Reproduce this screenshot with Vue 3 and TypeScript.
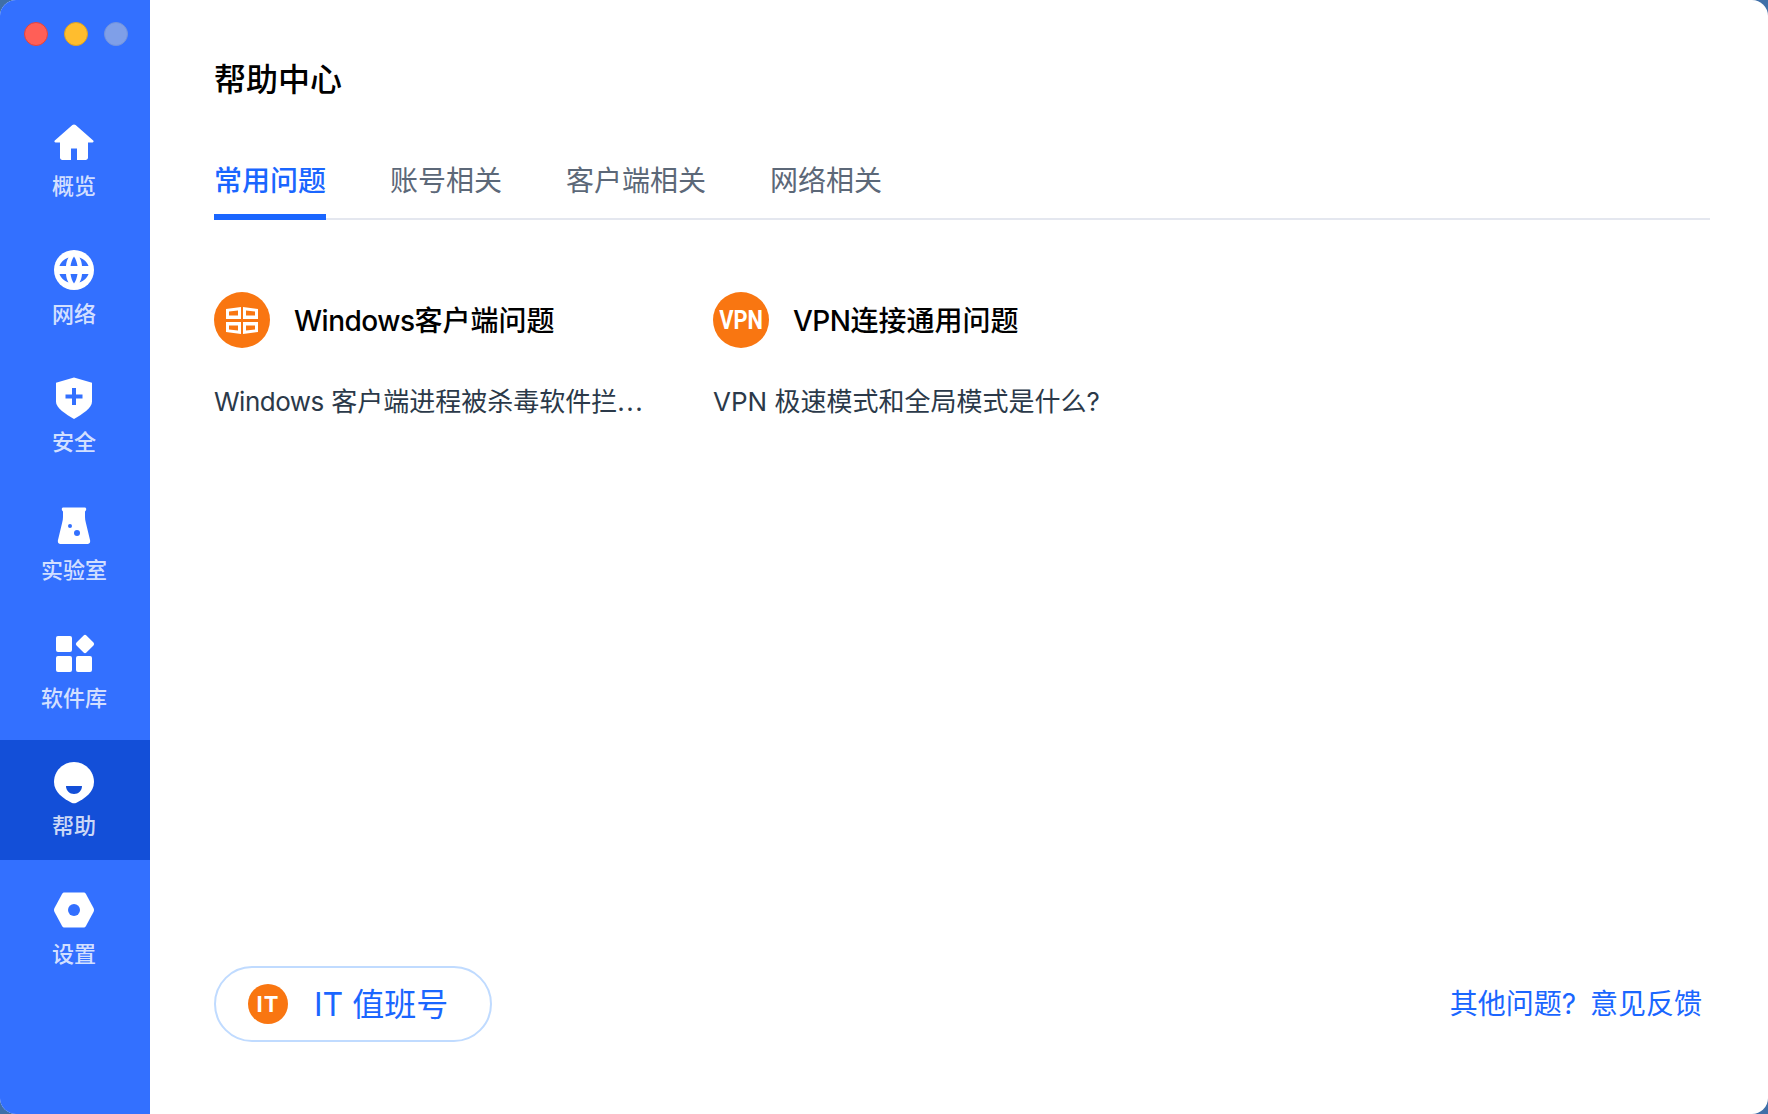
<template>
  <div class="window">
    <aside class="sidebar">
      <div class="lights">
        <span class="light red"></span>
        <span class="light yellow"></span>
        <span class="light grey"></span>
      </div>
      <nav class="nav">
        <div v-for="item in navItems" :key="item.label" class="nav-item" :class="{ active: item.label === '帮助' }">
          <svg v-if="item.icon === 'home'" class="nav-icon" viewBox="0 0 40 40">
            <path fill="#fff" d="M20 2.5c.6 0 1.100.2 1.600.6L39.200 18.600c.8.7.3 1.900-.8 1.900H34v15c0 1.600-1 2.500-2.500 2.500H23V26.500h-6V38H8.500C7 38 6 37.100 6 35.500v-15H1.600c-1.100 0-1.600-1.200-.8-1.900L18.400 3.100c.5-.4 1-.6 1.600-.6z" />
          </svg>
          <svg v-else-if="item.icon === 'globe'" class="nav-icon" viewBox="0 0 40 40">
            <circle cx="20" cy="20" r="20" fill="#fff" />
            <path fill="#3370ff" d="M20 6.500C21.800 9 23 12.500 23.500 16h-7C17 12.500 18.200 9 20 6.500zM20 33.500C21.800 31 23 27.500 23.500 24h-7C17 27.500 18.200 31 20 33.500zM14.500 7.500C13 10 12.200 13 12 16H5.500C6.500 12.500 10 9 14.500 7.500zM25.500 7.500C27 10 27.800 13 28 16h6.500C33.500 12.500 30 9 25.500 7.500zM14.500 32.500C13 30 12.200 27 12 24H5.500C6.500 27.500 10 31 14.500 32.500zM25.500 32.500C27 30 27.800 27 28 24h6.500C33.500 27.500 30 31 25.500 32.500z" />
          </svg>
          <svg v-else-if="item.icon === 'shield'" class="nav-icon" viewBox="0 0 40 40">
            <path fill="#fff" d="M20 -.5l18 5.300v19c0 6-9 12-18 17.200C11 35.800 2 29.800 2 23.800v-19z" />
            <path fill="#3370ff" d="M18 10h4v6.500h6.500v4H22V27h-4v-6.500h-6.500v-4H18z" />
          </svg>
          <svg v-else-if="item.icon === 'flask'" class="nav-icon" viewBox="0 0 40 40">
            <path fill="#fff" d="M9.500 1.500h21c1.300 0 1.900.9 1.700 2-.2.9-.7 1.500-1.200 1.900V11c0 2 .3 3.500.8 5.500L36 34c.6 2.400-.6 4-2.500 4H6.500C4.600 38 3.400 36.400 4 34l4.200-17.500c.5-2 .8-3.500.8-5.500V5.400c-.5-.4-1-1-1.200-1.900-.2-1.100.4-2 1.700-2z" />
            <circle cx="16" cy="20" r="2" fill="#3370ff" />
            <circle cx="23" cy="27" r="3" fill="#3370ff" />
          </svg>
          <svg v-else-if="item.icon === 'apps'" class="nav-icon" viewBox="0 0 40 40">
            <rect x="2" y="2" width="16" height="16" rx="2" fill="#fff" />
            <rect x="2" y="22" width="16" height="16" rx="2" fill="#fff" />
            <rect x="22" y="22" width="16" height="16" rx="2" fill="#fff" />
            <rect x="24" y="3" width="14" height="14" rx="2" fill="#fff" transform="rotate(45 31 10)" />
          </svg>
          <svg v-else-if="item.icon === 'help'" class="nav-icon" viewBox="0 0 40 40">
            <path fill="#fff" d="M20 0c11 0 20 9 20 20 0 10.500-9.500 16.500-17.500 20.700-1.600.8-3.400.8-5 0C9.500 36.500 0 30.500 0 20 0 9 9 0 20 0z" />
            <path fill="#134fd8" d="M12 24h16c0 4.500-3.500 8-8 8s-8-3.500-8-8z" />
          </svg>
          <svg v-else class="nav-icon" viewBox="0 0 40 40">
            <path fill="#fff" d="M10.500 2.500h19c1 0 1.800.5 2.300 1.300L39.500 18c.7 1.300.7 2.700 0 4L31.800 36.200c-.5.800-1.300 1.300-2.300 1.300h-19c-1 0-1.800-.5-2.300-1.300L.5 22c-.7-1.300-.7-2.700 0-4L8.200 3.800c.5-.8 1.300-1.300 2.300-1.300z" />
            <circle cx="20" cy="20" r="6" fill="#3370ff" />
          </svg>
          <span class="nav-label">{{ item.label }}</span>
        </div>
      </nav>
    </aside>

    <main class="main">
      <h1 class="title">帮助中心</h1>
      <div class="tabs">
        <div v-for="(tab, index) in tabs" :key="tab" class="tab" :class="{ active: index === 0 }">{{ tab }}</div>
      </div>

      <div class="cards">
        <section class="card">
          <div class="card-head">
            <span class="badge">
              <svg width="32" height="27" viewBox="0 0 32 27">
                <path fill="#fff" fill-rule="evenodd" d="M0 2L15 0V12H0zM3 4.500L12 3.500V8.500H3zM17 0L32 2V12H17zM20 3.500L29 4.500V8.500H20zM0 15H15V27L0 25zM3 18.500H12V23.500L3 22.500zM17 15H32V25L17 27zM20 18.500H29V22.500L20 23.500z" />
              </svg>
            </span>
            <h2 class="card-title"><span class="latin">Windows</span>客户端问题</h2>
          </div>
          <p class="card-text"><span class="latin">Windows</span> 客户端进程被杀毒软件拦<span class="dots">...</span></p>
        </section>
        <section class="card">
          <div class="card-head">
            <span class="badge badge-text"><span class="vpn">VPN</span></span>
            <h2 class="card-title"><span class="latin">VPN</span>连接通用问题</h2>
          </div>
          <p class="card-text">VPN 极速模式和全局模式是什么?</p>
        </section>
      </div>

      <div class="footer">
        <button class="duty">
          <span class="duty-icon">IT</span>
          <span class="duty-text">IT 值班号</span>
        </button>
        <a class="feedback">其他问题?<span class="feedback-gap"></span>意见反馈</a>
      </div>
    </main>
  </div>
</template>

<script setup lang="ts">
const navItems = [
  { label: "概览", icon: "home" },
  { label: "网络", icon: "globe" },
  { label: "安全", icon: "shield" },
  { label: "实验室", icon: "flask" },
  { label: "软件库", icon: "apps" },
  { label: "帮助", icon: "help" },
  { label: "设置", icon: "gear" }
];

const tabs = ["常用问题", "账号相关", "客户端相关", "网络相关"];
</script>

<style>
html,
body {
  margin: 0;
  background: #3f6fa8;
}
</style>

<style scoped>
.window {
  display: flex;
  width: 1768px;
  height: 1114px;
  border-radius: 16px;
  overflow: hidden;
  background: #fff;
  font-family: Inter, "Noto Sans CJK SC", sans-serif;
}

.sidebar {
  flex: none;
  width: 150px;
  background: #3370ff;
}

.lights {
  display: flex;
  gap: 16px;
  padding: 22px 0 0 24px;
  height: 78px;
}

.light {
  width: 24px;
  height: 24px;
  box-sizing: border-box;
  border-radius: 50%;
  border: 1px solid transparent;
}

.red {
  background: #ff5f57;
  border-color: #e0443e;
}

.yellow {
  background: #ffbd2e;
  border-color: #dea123;
}

.grey {
  background: #7f9fe8;
  border-color: #7393dc;
}

.nav {
  display: flex;
  flex-direction: column;
  gap: 8px;
}

.nav-item {
  height: 120px;
  box-sizing: border-box;
  padding: 22px 2px 0 0;
  display: flex;
  flex-direction: column;
  align-items: center;
  color: rgba(255, 255, 255, 0.8);
}

.nav-item.active {
  background: #134fd8;
}

.nav-icon {
  width: 40px;
  height: 40px;
  flex: none;
  overflow: visible;
}

.nav-label {
  margin-top: 9px;
  font-size: 22px;
  line-height: 30px;
  font-weight: 500;
}

.main {
  flex: 1;
  display: flex;
  flex-direction: column;
  padding: 0 58px 72px 64px;
  min-width: 0;
}

.title {
  margin: 60px 0 0;
  font-size: 32px;
  line-height: 40px;
  font-weight: 500;
  color: #000;
}

.tabs {
  display: flex;
  gap: 64px;
  margin-top: 61px;
  border-bottom: 2px solid #e4e7ef;
}

.tab {
  font-size: 28px;
  line-height: 40px;
  padding-bottom: 13px;
  margin-bottom: -2px;
  border-bottom: 6px solid transparent;
  color: #5c6878;
}

.tab.active {
  color: #1a66ff;
  font-weight: 500;
  border-bottom-color: #1a66ff;
}

.cards {
  display: flex;
  gap: 65px;
  margin-top: 72px;
}

.card {
  width: 434px;
}

.card-head {
  display: flex;
  align-items: center;
  gap: 24px;
}

.badge {
  width: 56px;
  height: 56px;
  flex: none;
  border-radius: 50%;
  background: #f97611;
  display: flex;
  align-items: center;
  justify-content: center;
}

.badge-text {
  color: #fff;
  font-size: 26px;
  font-weight: 700;
  font-family: Roboto, sans-serif;
}

.vpn {
  transform: scaleX(0.84);
}

.card-title {
  margin: 0;
  padding-top: 2px;
  font-size: 28px;
  line-height: 40px;
  font-weight: 500;
  color: #000;
}

.latin {
  letter-spacing: -0.5px;
}

.card-text {
  margin: 34px 0 0;
  font-size: 26px;
  line-height: 40px;
  color: #2b3949;
  white-space: nowrap;
}

.dots {
  letter-spacing: 1.5px;
}

.footer {
  margin-top: auto;
  display: flex;
  align-items: center;
  justify-content: space-between;
  padding-right: 8px;
}

.duty {
  width: 278px;
  height: 76px;
  box-sizing: border-box;
  border: 2px solid #c0dbff;
  border-radius: 38px;
  background: #fff;
  padding: 0 0 0 32px;
  display: flex;
  align-items: center;
  gap: 26px;
  font: inherit;
  font-size: 32px;
  color: #1a66ff;
}

.duty-text {
  padding-bottom: 4px;
}

.duty-icon {
  width: 40px;
  height: 40px;
  flex: none;
  border-radius: 50%;
  background: #f97611;
  color: #fff;
  font-size: 22px;
  font-weight: 700;
  letter-spacing: 1px;
  line-height: 40px;
  text-align: center;
}

.feedback {
  font-size: 28px;
  line-height: 40px;
  display: flex;
  color: #1a66ff;
}

.feedback-gap {
  width: 14px;
}
</style>
